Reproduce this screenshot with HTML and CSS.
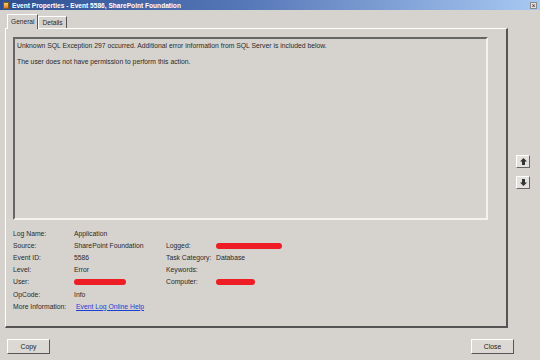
FILE: index.html
```html
<!DOCTYPE html>
<html lang="en">
<head>
    <meta charset="UTF-8">
    <title>Event Properties - Event 5586, SharePoint Foundation</title>
    <link rel="stylesheet" href="styles.css">
</head>
<body>
    <div class="window">
        <div class="titlebar">
            <span class="app-icon"></span>
            <span class="title">Event Properties - Event 5586, SharePoint Foundation</span>
            <span class="close-btn">&#215;</span>
        </div>

        <div class="main">
            <div class="tabset">
                <div class="tabs">
                    <span class="tab active">General</span>
                    <span class="tab">Details</span>
                </div>
                <div class="panel">
                    <div class="message">
                        <p>Unknown SQL Exception 297 occurred. Additional error information from SQL Server is included below.</p>
                        <p>The user does not have permission to perform this action.</p>
                    </div>

                    <div class="fields">
                        <span class="label">Log Name:</span>
                        <span class="value">Application</span>
                        <span></span><span></span>

                        <span class="label">Source:</span>
                        <span class="value">SharePoint Foundation</span>
                        <span class="label">Logged:</span>
                        <span class="value"><span class="redact long"></span></span>

                        <span class="label">Event ID:</span>
                        <span class="value">5586</span>
                        <span class="label">Task Category:</span>
                        <span class="value">Database</span>

                        <span class="label">Level:</span>
                        <span class="value">Error</span>
                        <span class="label">Keywords:</span>
                        <span class="value"></span>

                        <span class="label">User:</span>
                        <span class="value"><span class="redact short"></span></span>
                        <span class="label">Computer:</span>
                        <span class="value"><span class="redact"></span></span>

                        <span class="label">OpCode:</span>
                        <span class="value">Info</span>
                        <span></span><span></span>

                        <span class="label">More Information:</span>
                        <span class="value"><a href="#" class="help-link">Event Log Online Help</a></span>
                        <span></span><span></span>
                    </div>
                </div>
            </div>

            <div class="side">
                <button class="arrow-btn" type="button">
                    <svg width="7" height="7" viewBox="0 0 7 7"><path d="M3.5 0 L7 3.5 L5 3.5 L5 7 L2 7 L2 3.5 L0 3.5 Z" fill="#333"/></svg>
                </button>
                <button class="arrow-btn" type="button">
                    <svg width="7" height="7" viewBox="0 0 7 7"><path d="M3.5 7 L7 3.5 L5 3.5 L5 0 L2 0 L2 3.5 L0 3.5 Z" fill="#333"/></svg>
                </button>
            </div>
        </div>

        <div class="footer">
            <button class="btn" type="button">Copy</button>
            <button class="btn" type="button">Close</button>
        </div>
    </div>
</body>
</html>
```

FILE: styles.css
```css
/* Dasar halaman */
body {
    margin: 0;
    font-family: "Liberation Sans", Arial, sans-serif;
    font-size: 7px;
    color: #2a2a2a;
    background: #d6d3ce;
}

.window {
    width: 540px;
    height: 360px;
    display: flex;
    flex-direction: column;
    background: #d6d3ce;
}

/* Title bar */
.titlebar {
    height: 10px;
    display: flex;
    align-items: center;
    padding: 0 3px;
    background: linear-gradient(to right, #2e4f92 0%, #5677b7 45%, #a8c9f2 100%);
}

.app-icon {
    width: 6px;
    height: 7px;
    background: linear-gradient(to bottom, #f5d36a, #e07a2a);
    border: 1px solid #8a5a20;
    box-sizing: border-box;
}

.title {
    margin-left: 3px;
    flex: 1;
    color: #fff;
    font-weight: bold;
    font-size: 6.6px;
}

.close-btn {
    width: 7px;
    height: 7px;
    line-height: 6px;
    text-align: center;
    font-size: 7px;
    color: #222;
    background: #e6e4e0;
    border: 1px solid #888;
    box-sizing: border-box;
}

/* Area utama */
.main {
    flex: 1;
    display: flex;
    padding: 4px 0 0 5px;
}

.tabset {
    width: 503px;
    display: flex;
    flex-direction: column;
}

.tabs {
    display: flex;
    height: 14px;
    padding-left: 2px;
}

.tab {
    padding: 2px 3px 0;
    border: 1px solid #fff;
    border-right-color: #555;
    border-bottom: none;
    font-size: 6.6px;
    margin-top: 2px;
}

.tab.active {
    margin-top: 0;
    padding: 3px 3px 0;
    background: #d6d3ce;
    position: relative;
    z-index: 1;
    margin-bottom: -1px;
}

.panel {
    height: 300px;
    border: 1px solid #fff;
    border-right: 2px solid #555;
    border-bottom: 2px solid #555;
    box-sizing: border-box;
    padding: 8px 18px 0 7px;
}

/* Kotak pesan */
.message {
    height: 183px;
    border: 2px solid #666;
    border-right: 2px solid #f4f2ee;
    border-bottom: 2px solid #f4f2ee;
    box-sizing: border-box;
    padding: 3px 2px;
}

.message p {
    margin: 0 0 9px;
    font-size: 6.8px;
}

/* Daftar field */
.fields {
    display: grid;
    grid-template-columns: 61px 92px 50px 1fr;
    grid-auto-rows: 12.2px;
    margin-top: 7px;
    font-size: 6.8px;
    align-items: center;
}

.label,
.value {
    white-space: nowrap;
}

.redact {
    display: inline-block;
    width: 39px;
    height: 6px;
    border-radius: 3px;
    background: #ee1c24;
    vertical-align: middle;
}

.redact.long {
    width: 66px;
}

.redact.short {
    width: 52px;
}

.help-link {
    color: #1c3fd6;
    margin-left: 2px;
}

/* Tombol panah di samping */
.side {
    display: flex;
    flex-direction: column;
    gap: 8px;
    padding: 141px 0 0 8px;
}

.arrow-btn {
    width: 14px;
    height: 13px;
    padding: 0;
    display: flex;
    align-items: center;
    justify-content: center;
    background: #e4e2de;
    border: 1px solid #fff;
    border-right-color: #666;
    border-bottom-color: #666;
}

/* Tombol bawah */
.footer {
    display: flex;
    justify-content: space-between;
    padding: 0 26px 6px 7px;
}

.btn {
    width: 43px;
    height: 15px;
    padding: 0;
    font-family: "Liberation Sans", Arial, sans-serif;
    font-size: 6.8px;
    color: #222;
    background: #dcd9d4;
    border: 1px solid #fff;
    border-right-color: #555;
    border-bottom-color: #555;
}
```
